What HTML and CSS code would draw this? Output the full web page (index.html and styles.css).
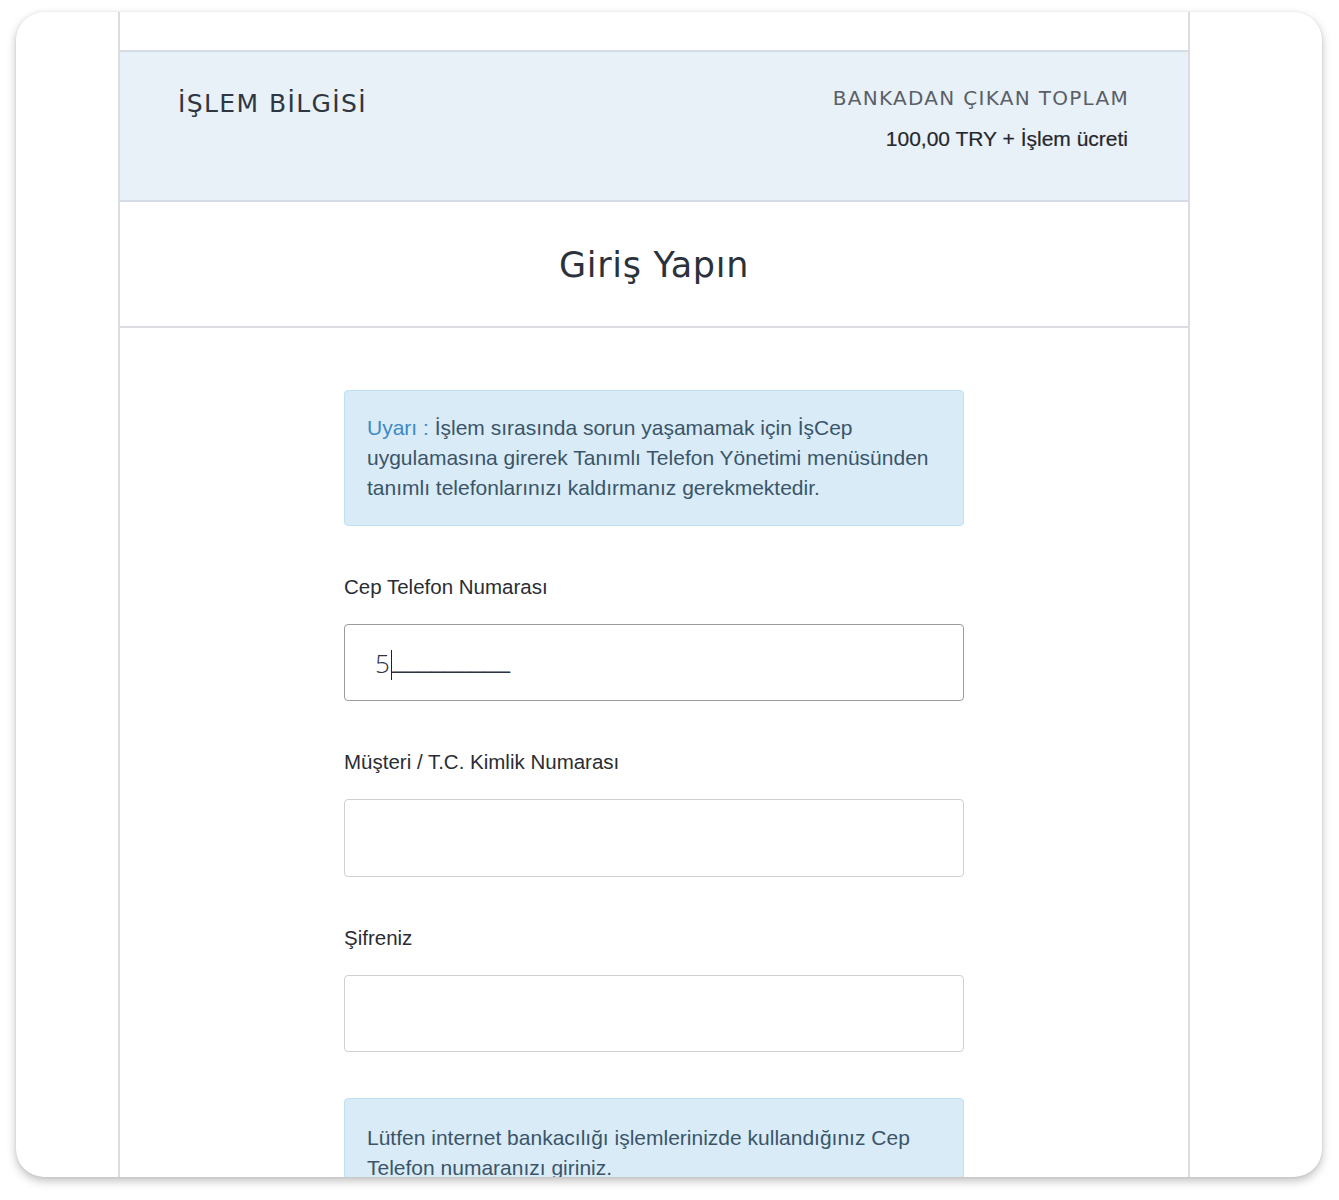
FILE: index.html
```html
<!DOCTYPE html>
<html lang="tr">
<head>
<meta charset="utf-8">
<title>Giriş Yapın</title>
<link rel="stylesheet" href="styles.css">
</head>
<body>
<div class="frame">
  <div class="card">
    <div class="page">
      <div class="top-strip"></div>
      <div class="info">
        <div class="info-title">İŞLEM BİLGİSİ</div>
        <div class="info-total">
          <div class="total-label">BANKADAN ÇIKAN TOPLAM</div>
          <div class="total-value">100,00 TRY + İşlem ücreti</div>
        </div>
      </div>
      <div class="heading">
        <h1 class="heading-text">Giriş Yapın</h1>
      </div>
      <div class="form">
        <p class="alert"><span class="alert-key">Uyarı :</span> İşlem sırasında sorun yaşamamak için İşCep uygulamasına girerek Tanımlı Telefon Yönetimi menüsünden tanımlı telefonlarınızı kaldırmanız gerekmektedir.</p>
        <div class="field">
          <div class="label">Cep Telefon Numarası</div>
          <div class="input input-focus"><span class="typed">5</span><span class="caret"></span><span class="mask">_________</span></div>
        </div>
        <div class="field">
          <div class="label">Müşteri / T.C. Kimlik Numarası</div>
          <div class="input input-tall"></div>
        </div>
        <div class="field">
          <div class="label">Şifreniz</div>
          <div class="input"></div>
        </div>
        <p class="alert alert-low">Lütfen internet bankacılığı işlemlerinizde kullandığınız Cep Telefon numaranızı giriniz.</p>
      </div>
    </div>
  </div>
</div>
</body>
</html>
```

FILE: styles.css
```css
* { box-sizing: border-box; }
html, body { margin: 0; padding: 0; background: #ffffff; }
body { font-family: "Liberation Sans", Arial, sans-serif; color: #333; }

.frame {
  width: 1339px;
  height: 1200px;
  padding: 12px 17px 23px 16px;
}
.card {
  width: 1306px;
  height: 1165px;
  background: #fff;
  border-radius: 28px;
  box-shadow: 0 4px 10px rgba(0, 0, 0, 0.25), 0 0 3px rgba(0,0,0,0.08);
  overflow: hidden;
}
.page {
  margin-left: 102px;
  width: 1072px;
  height: 100%;
  border-left: 2px solid #dcdce2;
  border-right: 2px solid #dcdce2;
}
.top-strip { height: 38px; }
.info {
  height: 152px;
  background: #e8f0f8;
  border-top: 2px solid #d5dce6;
  border-bottom: 2px solid #d5dce6;
  display: flex;
  justify-content: space-between;
  padding: 34px 60px 0 58px;
}
.info-title {
  font-family: "DejaVu Sans", sans-serif;
  font-size: 25px;
  color: #2f3742;
  letter-spacing: 1.4px;
  padding-top: 3px;
}
.info-total { text-align: right; }
.total-label {
  font-family: "DejaVu Sans", sans-serif;
  font-size: 20px;
  color: #5a5f66;
  letter-spacing: 1.3px;
  line-height: 26px;
  margin-top: -1px;
  margin-right: -1px;
}
.total-value {
  font-size: 21px;
  color: #25272b;
  line-height: 26px;
  margin-top: 15px;
  -webkit-text-stroke: 0.2px #25272b;
}
.heading {
  height: 126px;
  border-bottom: 2px solid #dcdce2;
  display: flex;
  align-items: center;
  justify-content: center;
}
.heading-text {
  margin: 0;
  font-family: "DejaVu Sans", sans-serif;
  font-weight: normal;
  font-size: 35px;
  letter-spacing: 0.7px;
  color: #2b323c;
  padding-top: 2px;
}
.form {
  width: 620px;
  margin: 62px auto 0;
}
.alert {
  margin: 0;
  background: #d9ebf6;
  border: 1px solid #bde3f0;
  border-radius: 4px;
  padding: 22px 22px;
  font-size: 21px;
  line-height: 30px;
  color: #3a5569;
}
.alert-key { color: #3d88c6; }
.field { margin-top: 49px; }
.label {
  font-size: 20.5px;
  line-height: 24px;
  color: #2a2d33;
  margin-bottom: 25px;
}
.input {
  height: 77px;
  border: 1px solid #cfcfd4;
  border-radius: 4px;
  background: #fff;
  display: flex;
  align-items: center;
  padding-left: 30px;
  font-size: 24px;
  color: #333;
}
.input-tall { height: 78px; }
.input-focus { border-color: #9a9a9f; }
.typed { font-family: "Open Sans", sans-serif; font-weight: 300; font-size: 26px; color: #2e3340; }
.caret {
  width: 1.5px;
  height: 30px;
  background: #222;
  margin-left: 1px;
  margin-top: 4px;
}
.mask { color: #2e3340; position: relative; top: -2px; font-size: 23.5px; }
.alert-low { margin-top: 46px; padding-top: 24px; }
```
